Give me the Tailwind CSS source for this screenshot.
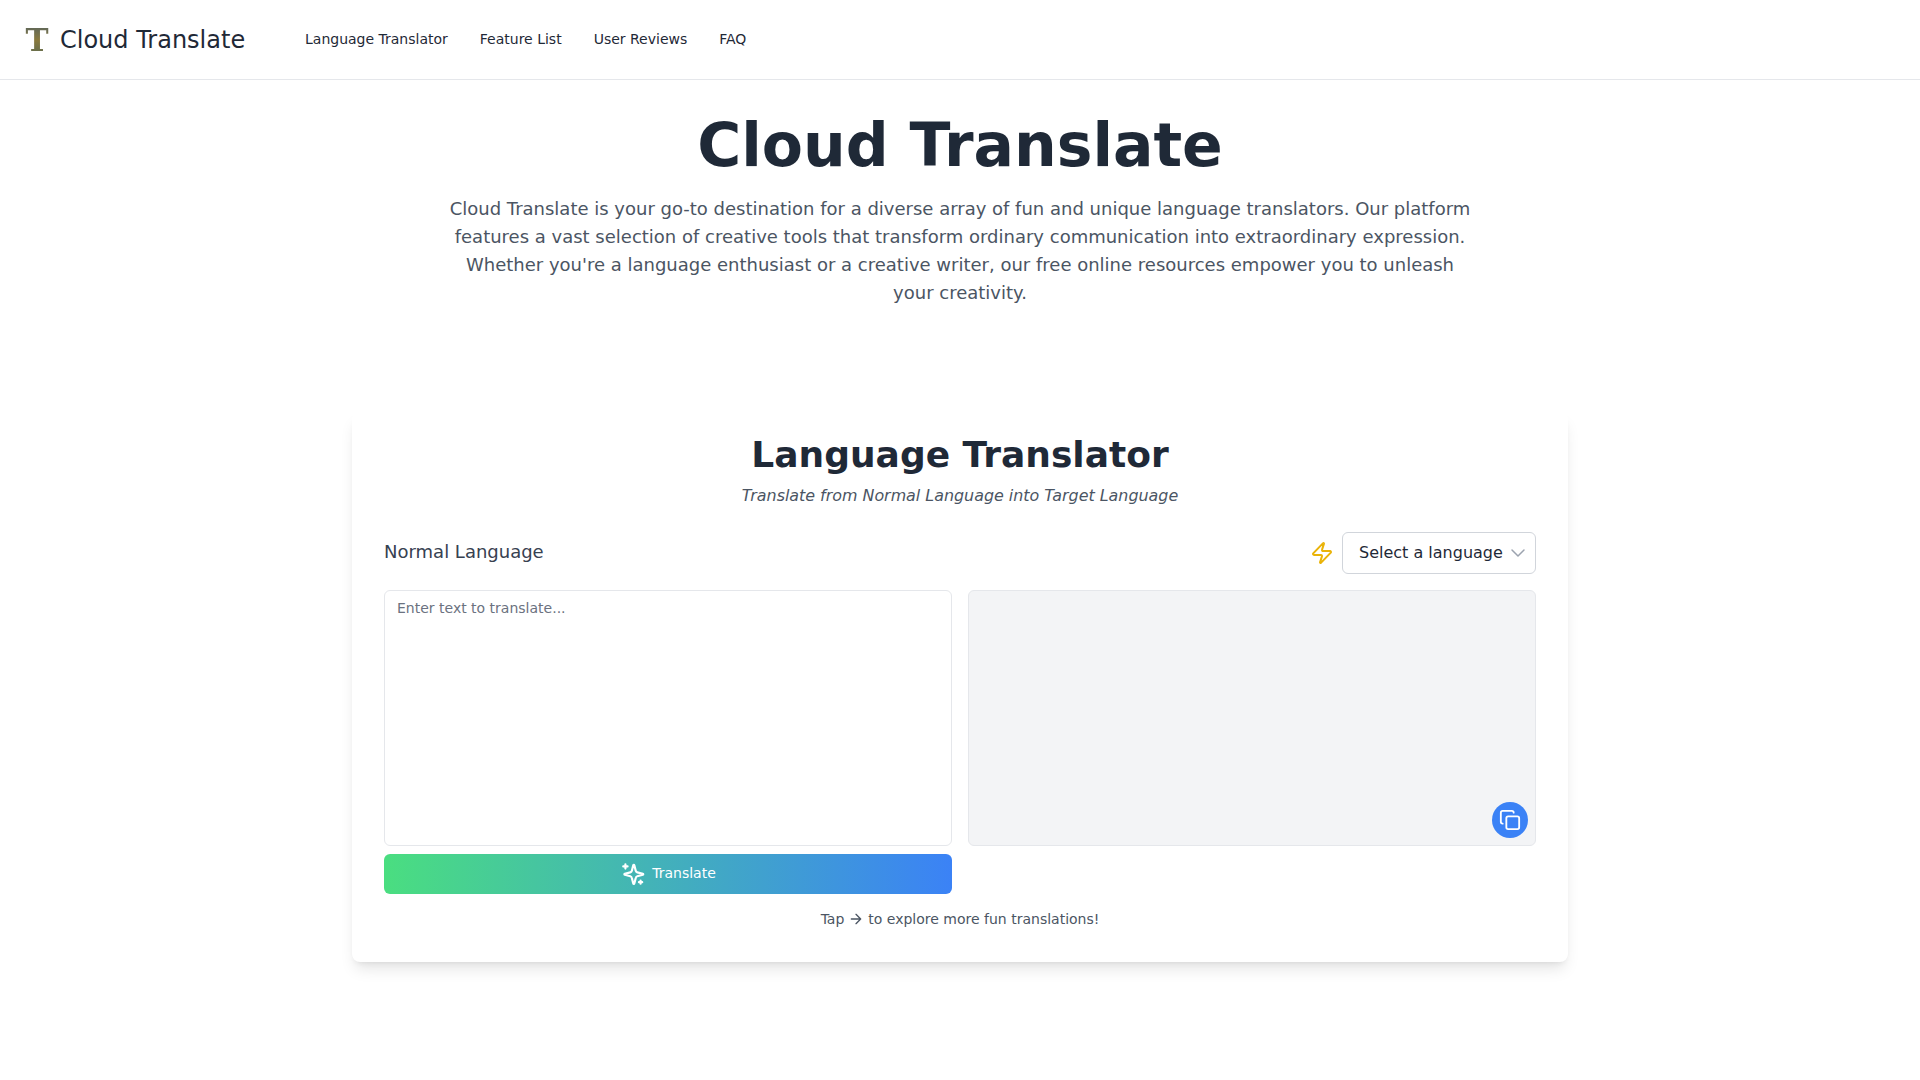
<!DOCTYPE html>
<html lang="en">
<head>
  <meta charset="UTF-8" />
  <meta name="viewport" content="width=device-width, initial-scale=1.0" />
  <title>Cloud Translate</title>
  <script src="https://cdn.jsdelivr.net/npm/@tailwindcss/browser@4"></script>
</head>
<body class="min-h-screen bg-white text-[#1f2937] font-['DejaVu_Sans',sans-serif]">
  <!-- Header -->
  <header class="h-20 border-b border-[#e5e7eb] bg-white flex items-center pl-[23px] pr-6">
    <a href="#" class="flex items-center gap-[9px] w-[246px] shrink-0">
      <span class="w-7 text-center text-[31px] leading-8 font-bold font-['DejaVu_Serif',serif] bg-gradient-to-b from-[#56635c] via-[#8a7a3c] to-[#5c6a50] bg-clip-text text-transparent">T</span>
      <span class="text-2xl text-[#1f2937]">Cloud Translate</span>
    </a>
    <nav class="flex items-center gap-8 ml-[36px] pb-0.5 text-sm text-[#1f2937]">
      <a href="#">Language Translator</a>
      <a href="#">Feature List</a>
      <a href="#">User Reviews</a>
      <a href="#">FAQ</a>
    </nav>
  </header>

  <!-- Hero -->
  <section class="text-center pt-[35px]">
    <h1 class="text-6xl leading-none font-bold text-[#1f2937]">Cloud Translate</h1>
    <p class="max-w-5xl mx-auto mt-5 text-lg leading-7 text-[#4b5563]">Cloud Translate is your go-to destination for a diverse array of fun and unique language translators. Our platform features a vast selection of creative tools that transform ordinary communication into extraordinary expression. Whether you're a language enthusiast or a creative writer, our free online resources empower you to unleash your creativity.</p>
  </section>

  <!-- Translator card -->
  <main class="max-w-7xl mx-auto px-8 mt-[105px] pb-16">
    <div class="bg-white rounded-lg shadow-lg px-8 pt-[23px] pb-[33px]">
      <h2 class="text-4xl leading-10 font-bold text-center text-[#1f2937]">Language Translator</h2>
      <p class="text-[15.9px] leading-6 italic text-center text-[#4b5563] mt-[9px]">Translate from Normal Language into Target Language</p>

      <div class="flex items-center justify-between mt-6">
        <span class="text-lg text-[#374151] pb-0.5">Normal Language</span>
        <div class="flex items-center gap-2">
          <svg class="w-6 h-6 text-[#eab308]" viewBox="0 0 24 24" fill="none" stroke="currentColor" stroke-width="2" stroke-linecap="round" stroke-linejoin="round"><path d="M4 14a1 1 0 0 1-.78-1.63l9.9-10.2a.5.5 0 0 1 .86.46l-1.92 6.02A1 1 0 0 0 13 10h7a1 1 0 0 1 .78 1.63l-9.9 10.2a.5.5 0 0 1-.86-.46l1.92-6.02A1 1 0 0 0 11 14z"/></svg>
          <div class="relative">
            <select class="appearance-none h-[42px] w-[194px] pl-4 pr-8 bg-white border border-[#d1d5db] rounded-md text-base text-[#1f2937]">
              <option>Select a language</option>
            </select>
            <svg class="absolute right-1.5 top-[9px] w-6 h-6 text-[#9ca3af] pointer-events-none" viewBox="0 0 24 24" fill="none" stroke="currentColor" stroke-width="1.5" stroke-linecap="round" stroke-linejoin="round"><path d="m6 9 6 6 6-6"/></svg>
          </div>
        </div>
      </div>

      <div class="grid grid-cols-2 gap-4 mt-4">
        <div>
          <textarea class="block w-full h-64 px-3 py-[7px] text-sm border border-[#e5e7eb] rounded-md resize-none placeholder:text-[#6b7280]" placeholder="Enter text to translate..."></textarea>
          <button class="w-full h-10 mt-2 flex items-center justify-center gap-1.5 rounded-md bg-linear-to-r/srgb from-[#4ade80] to-[#3b82f6] text-sm text-white">
            <svg class="w-[26px] h-[26px]" viewBox="0 0 24 24" fill="none" stroke="currentColor" stroke-width="2" stroke-linecap="round" stroke-linejoin="round"><path d="M9.94 14.6A2 2 0 0 0 8.5 13.06L3.4 11.75a.5.5 0 0 1 0-.96l5.1-1.32A2 2 0 0 0 9.94 8l1.31-5.13a.5.5 0 0 1 .96 0L13.53 8A2 2 0 0 0 14.96 9.47l5.13 1.31a.5.5 0 0 1 0 .97L14.96 13.06A2 2 0 0 0 13.53 14.6l-1.32 5.1a.5.5 0 0 1-.96 0z" transform="translate(1 1)"/><path d="M5 3v4M3 5h4M19 18v3M17.5 19.5h3"/></svg>
            <span class="pb-0.5">Translate</span>
          </button>
        </div>
        <div class="relative h-64 bg-[#f3f4f6] border border-[#e5e7eb] rounded-md">
          <button class="absolute right-[7px] bottom-[7px] w-9 h-9 rounded-full bg-[#3b82f6] text-white flex items-center justify-center">
            <svg class="w-[22px] h-[22px]" viewBox="0 0 24 24" fill="none" stroke="currentColor" stroke-width="2" stroke-linecap="round" stroke-linejoin="round"><rect x="8" y="8" width="14" height="14" rx="2"/><path d="M4 16c-1.1 0-2-.9-2-2V4c0-1.1.9-2 2-2h10c1.1 0 2 .9 2 2"/></svg>
          </button>
        </div>
      </div>

      <p class="mt-[15px] flex items-center justify-center gap-1 text-sm text-[#4b5563]">Tap
        <svg class="w-4 h-4" viewBox="0 0 24 24" fill="none" stroke="currentColor" stroke-width="2" stroke-linecap="round" stroke-linejoin="round"><path d="M5 12h14M12 5l7 7-7 7"/></svg>
        to explore more fun translations!</p>
    </div>
  </main>
</body>
</html>
